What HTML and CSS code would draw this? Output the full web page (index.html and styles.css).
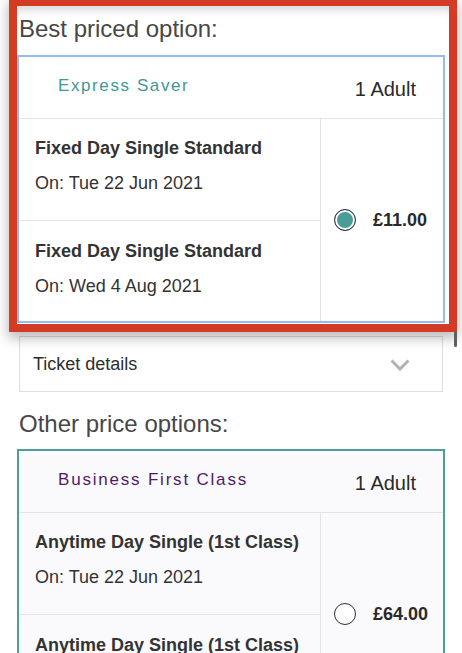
FILE: index.html
```html
<!DOCTYPE html>
<html lang="en">
<head>
<meta charset="utf-8">
<title>Price options</title>
<link rel="stylesheet" href="styles.css">
</head>
<body>
<div class="page">
  <h2 class="section-title">Best priced option:</h2>

  <div class="fare-card fare-card--selected">
    <div class="fare-head">
      <span class="fare-tier fare-tier--saver">Express Saver</span>
      <span class="fare-pax">1 Adult</span>
    </div>
    <div class="fare-body">
      <div class="fare-legs">
        <div class="leg">
          <div class="leg-name">Fixed Day Single Standard</div>
          <div class="leg-date">On: Tue 22 Jun 2021</div>
        </div>
        <div class="leg">
          <div class="leg-name">Fixed Day Single Standard</div>
          <div class="leg-date">On: Wed 4 Aug 2021</div>
        </div>
      </div>
      <div class="fare-price">
        <span class="radio radio--on"></span>
        <span class="price">£11.00</span>
      </div>
    </div>
  </div>

  <div class="ticket-details">
    <span>Ticket details</span>
    <svg class="chevron" width="20" height="12" viewBox="0 0 20 12"><polyline points="1.5,1.5 10,10 18.5,1.5" fill="none" stroke="#b1b1b8" stroke-width="3" stroke-linejoin="miter"/></svg>
  </div>

  <h2 class="section-title section-title--other">Other price options:</h2>

  <div class="fare-card fare-card--alt">
    <div class="fare-head">
      <span class="fare-tier fare-tier--first">Business First Class</span>
      <span class="fare-pax">1 Adult</span>
    </div>
    <div class="fare-body">
      <div class="fare-legs">
        <div class="leg">
          <div class="leg-name">Anytime Day Single (1st Class)</div>
          <div class="leg-date">On: Tue 22 Jun 2021</div>
        </div>
        <div class="leg">
          <div class="leg-name">Anytime Day Single (1st Class)</div>
          <div class="leg-date">On: Wed 4 Aug 2021</div>
        </div>
      </div>
      <div class="fare-price">
        <span class="radio"></span>
        <span class="price">£64.00</span>
      </div>
    </div>
  </div>
</div>

<div class="highlight"></div>
<div class="scrollbar"></div>
</body>
</html>
```

FILE: styles.css
```css
html, body {
  margin: 0;
  padding: 0;
  background: #ffffff;
  overflow: hidden;
}

body {
  font-family: "Liberation Sans", Arial, sans-serif;
  color: #333333;
  position: relative;
  height: 653px;
}

.page {
  padding: 15px 19px 0;
}

.section-title {
  margin: 0;
  font-size: 24px;
  line-height: 28px;
  font-weight: normal;
  color: #474747;
}

.section-title--other {
  margin-top: 18px;
}

.fare-card {
  margin: 12px -2px 0;
  border: 2px solid #93bcf0;
  background: #ffffff;
}

.fare-card--alt {
  margin-top: 11px;
  border-color: #4f9d9a;
  background: #fafafc;
}

.fare-head {
  box-sizing: border-box;
  height: 62px;
  display: flex;
  justify-content: space-between;
  align-items: flex-start;
  padding: 19px 27px 0 39px;
  border-bottom: 1px solid #e4e4e6;
}

.fare-tier {
  font-size: 17px;
  line-height: 20px;
  letter-spacing: 1.6px;
}

.fare-tier--saver {
  color: #3f9793;
}

.fare-tier--first {
  color: #4f1b66;
  letter-spacing: 1.8px;
}

.fare-pax {
  margin-top: 1px;
  font-size: 20px;
  line-height: 24px;
  color: #2a2a2a;
}

.fare-body {
  display: flex;
}

.fare-legs {
  box-sizing: border-box;
  width: 302px;
  border-right: 1px solid #e4e4e6;
}

.leg {
  box-sizing: border-box;
  height: 101px;
  padding: 19px 16px 0;
}

.leg + .leg {
  border-top: 1px solid #e4e4e6;
  padding-top: 20px;
}

.leg-name {
  font-size: 18px;
  line-height: 20px;
  font-weight: bold;
  color: #333333;
}

.leg-date {
  margin-top: 15px;
  font-size: 18px;
  line-height: 20px;
  color: #333333;
}

.fare-price {
  flex: 1;
  display: flex;
  align-items: center;
  padding-left: 13px;
}

.radio {
  box-sizing: border-box;
  width: 22px;
  height: 22px;
  border-radius: 50%;
  border: 1.5px solid #2e2e2e;
  background: #ffffff;
  margin-right: 17px;
  flex: none;
}

.radio--on {
  background: #4a9c99;
  box-shadow: inset 0 0 0 2px #ffffff;
}

.price {
  font-size: 18px;
  font-weight: bold;
  color: #2a2a2a;
}

.ticket-details {
  box-sizing: border-box;
  margin-top: 13px;
  height: 56px;
  border: 1px solid #dedee0;
  display: flex;
  justify-content: space-between;
  align-items: center;
  padding: 0 32px 0 13px;
  font-size: 18px;
  color: #2e2e2e;
}

.chevron {
  display: block;
  margin-top: 2px;
}

.highlight {
  position: absolute;
  left: 9px;
  top: -2px;
  width: 448px;
  height: 334px;
  box-sizing: border-box;
  border: 8px solid #d33b24;
  box-shadow: inset 0 9px 9px -5px rgba(0, 0, 0, 0.16),
              0 5px 12px 1px rgba(0, 0, 0, 0.28);
  pointer-events: none;
}

.scrollbar {
  position: absolute;
  left: 454px;
  top: 331px;
  width: 3px;
  height: 16px;
  border-radius: 2px;
  background: #5e5e5e;
}
```
